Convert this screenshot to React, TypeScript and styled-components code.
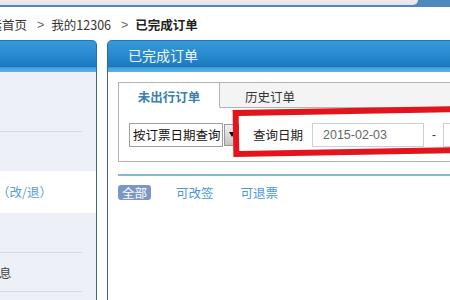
import React from "react";
import styled, { createGlobalStyle } from "styled-components";

const Global = createGlobalStyle`
  html, body { margin: 0; padding: 0; background: #fff; }
  body {
    font-family: "Noto Sans CJK SC", "Liberation Sans", sans-serif;
    width: 450px;
    height: 300px;
    overflow: hidden;
  }
`;

const Page = styled.div`
  position: relative;
  width: 450px;
  height: 300px;
  overflow: hidden;
  background: #fff;
  display: flex;
  flex-direction: column;
`;

const TopBar = styled.div`
  height: 7px;
  flex-shrink: 0;
  background: #4d88be;
  display: flex;
`;

const TopStrip = styled.div`
  width: 418px;
  height: 5px;
  background: linear-gradient(#f0e9ef, #e5e2ea);
  border-bottom-right-radius: 6px;
`;

const Crumbs = styled.div`
  height: 33px;
  flex-shrink: 0;
  box-sizing: border-box;
  padding-top: 2px;
  display: flex;
  align-items: center;
  font-size: 12.5px;
  color: #333;
  white-space: nowrap;
`;

const CrumbLink = styled.span<{ $offset?: number }>`
  margin-left: ${(p) => p.$offset ?? 0}px;
`;

const CrumbSep = styled.span`
  font-family: "Liberation Sans", sans-serif;
  color: #666;
  margin: 0 7px 0 10px;
`;

const CrumbCurrent = styled.span`
  font-weight: bold;
  color: #222;
`;

const Main = styled.div`
  flex: 1;
  display: flex;
  align-items: stretch;
`;

const LeftPanel = styled.div`
  width: 97px;
  flex-shrink: 0;
  display: flex;
  flex-direction: column;
`;

const PanelHeader = styled.div<{ $corner: "left" | "right" }>`
  height: 32px;
  flex-shrink: 0;
  box-sizing: border-box;
  border-top: 1px solid #2a74b2;
  ${(p) =>
    p.$corner === "left"
      ? "border-top-left-radius: 5px; border-left: 1px solid #2a6aa2;"
      : "border-top-right-radius: 5px; border-right: 1px solid #2a6aa2;"}
  background: linear-gradient(
    to bottom,
    #3798da 0%,
    #2a8ad0 45%,
    #1e7bc3 78%,
    #1a74bc 83%,
    #45a3de 86%,
    #5ab2e6 100%
  );
  display: flex;
  align-items: center;
  padding: 0 0 4px 20px;
  color: #eef7ff;
  font-size: 14px;
`;

const LeftBody = styled.div`
  flex: 1;
  background: #eef0f8;
  border-right: 1px solid #3d6874;
  display: flex;
  flex-direction: column;
`;

const NavRow = styled.div<{ $h: number; $active?: boolean }>`
  height: ${(p) => p.$h}px;
  flex-shrink: 0;
  background: ${(p) => (p.$active ? "#fff" : "transparent")};
`;

const NavInner = styled.div<{ $sep?: boolean; $active?: boolean }>`
  width: 82px;
  height: 100%;
  box-sizing: border-box;
  border-bottom: 1px solid ${(p) => (p.$sep ? "#d4d9e5" : "transparent")};
  display: flex;
  align-items: center;
  font-size: 12.5px;
  color: ${(p) => (p.$active ? "#5a9fcc" : "#444")};
  white-space: nowrap;
`;

const NavText = styled.span<{ $shift: number }>`
  margin-left: ${(p) => p.$shift}px;
`;

const RightPanel = styled.div`
  flex: 1;
  min-width: 0;
  margin-left: 10px;
  display: flex;
  flex-direction: column;
`;

const RightBody = styled.div`
  flex: 1;
  min-width: 0;
  border-left: 1px solid #3d6874;
  padding: 10px 0 0 10px;
  display: flex;
  flex-direction: column;
`;

const TabBar = styled.div`
  display: flex;
  height: 26px;
  box-sizing: border-box;
  border-top: 1px solid #b4b4b4;
  border-left: 1px solid #b4b4b4;
  background: #f4f4f4;
`;

const Tab = styled.div<{ $active?: boolean; $w?: number }>`
  ${(p) => (p.$w ? `width: ${p.$w}px; flex-shrink: 0;` : "flex: 1;")}
  height: 25px;
  box-sizing: border-box;
  padding-top: 3px;
  display: flex;
  align-items: center;
  justify-content: center;
  font-size: 12.5px;
  white-space: nowrap;
  background: ${(p) => (p.$active ? "#fff" : "#f4f4f4")};
  border-right: ${(p) => (p.$active ? "1px solid #b4b4b4" : "none")};
  border-bottom: 1px solid ${(p) => (p.$active ? "#fff" : "#b4b4b4")};
  color: ${(p) => (p.$active ? "#3b7fae" : "#333")};
  font-weight: ${(p) => (p.$active ? "bold" : "normal")};
`;

const QueryBox = styled.div`
  height: 54px;
  box-sizing: border-box;
  border-left: 1px solid #b4b4b4;
  border-bottom: 1px solid #b4b4b4;
  padding-left: 10px;
  display: flex;
  align-items: center;
  white-space: nowrap;
  overflow: hidden;
  & > * { flex-shrink: 0; }
`;

const SelectBox = styled.div`
  width: 94px;
  height: 24px;
  box-sizing: border-box;
  border: 1px solid #9e9e9e;
  background: #fff;
  display: flex;
  align-items: center;
  padding-left: 3px;
  font-size: 12.5px;
  color: #111;
  overflow: hidden;
`;

const ArrowBtn = styled.div`
  width: 15px;
  height: 22px;
  margin-left: 1px;
  box-sizing: border-box;
  border: 1px solid #999;
  background: linear-gradient(#f2f2f2, #c4c4c4);
  display: flex;
  align-items: center;
  justify-content: center;
`;

const Triangle = styled.span`
  width: 0;
  height: 0;
  border-left: 3px solid transparent;
  border-right: 3px solid transparent;
  border-top: 5px solid #111;
`;

const Label = styled.span`
  margin-left: 14px;
  font-size: 12.5px;
  color: #222;
`;

const DateInput = styled.div<{ $gap: number }>`
  margin-left: ${(p) => p.$gap}px;
  width: 112px;
  height: 24px;
  box-sizing: border-box;
  border: 1px solid #cfcfcf;
  background: #fff;
  display: flex;
  align-items: center;
  padding-left: 10px;
  font-family: "Liberation Sans", sans-serif;
  font-size: 12.5px;
  color: #666;
`;

const Dash = styled.span`
  margin-left: 8px;
  font-family: "Liberation Sans", sans-serif;
  font-size: 12px;
  color: #333;
`;

const TealLine = styled.div`
  margin-top: 12px;
  height: 2px;
  background: #7bbfcb;
`;

const Filters = styled.div`
  margin-top: 9px;
  display: flex;
  align-items: center;
  gap: 23px;
  font-size: 12.5px;
  white-space: nowrap;
`;

const Badge = styled.span`
  height: 15px;
  line-height: 15px;
  padding: 0 4px;
  border-radius: 3px;
  background: #7c97c6;
  color: #fff;
`;

const FilterLink = styled.span`
  padding: 0 2px;
  color: #4a97d6;
  line-height: 15px;
`;

const Annotation = styled.div`
  position: absolute;
  left: 233px;
  top: 110px;
  width: 236px;
  height: 47px;
  box-sizing: border-box;
  border: 6px solid #e3141c;
  transform: rotate(-1deg);
  transform-origin: 0 50%;
  pointer-events: none;
`;

export default function App() {
  return (
    <>
      <Global />
      <Page>
        <TopBar>
          <TopStrip />
        </TopBar>
        <Crumbs>
          <CrumbLink $offset={-23}>客运首页</CrumbLink>
          <CrumbSep>&gt;</CrumbSep>
          <CrumbLink>我的12306</CrumbLink>
          <CrumbSep>&gt;</CrumbSep>
          <CrumbCurrent>已完成订单</CrumbCurrent>
        </Crumbs>
        <Main>
          <LeftPanel>
            <PanelHeader $corner="right" />
            <LeftBody>
              <NavRow $h={60}>
                <NavInner $sep />
              </NavRow>
              <NavRow $h={39}>
                <NavInner />
              </NavRow>
              <NavRow $h={42} $active>
                <NavInner $active>
                  <NavText $shift={-3}>（改/退）</NavText>
                </NavInner>
              </NavRow>
              <NavRow $h={40}>
                <NavInner $sep />
              </NavRow>
              <NavRow $h={39}>
                <NavInner $sep>
                  <NavText $shift={-1}>息</NavText>
                </NavInner>
              </NavRow>
            </LeftBody>
          </LeftPanel>
          <RightPanel>
            <PanelHeader $corner="left">已完成订单</PanelHeader>
            <RightBody>
              <TabBar>
                <Tab $active $w={101}>未出行订单</Tab>
                <Tab $w={100}>历史订单</Tab>
                <Tab />
              </TabBar>
              <QueryBox>
                <SelectBox>按订票日期查询</SelectBox>
                <ArrowBtn>
                  <Triangle />
                </ArrowBtn>
                <Label>查询日期</Label>
                <DateInput $gap={9}>2015-02-03</DateInput>
                <Dash>-</Dash>
                <DateInput $gap={7} />
              </QueryBox>
              <TealLine />
              <Filters>
                <Badge>全部</Badge>
                <FilterLink>可改签</FilterLink>
                <FilterLink>可退票</FilterLink>
              </Filters>
            </RightBody>
          </RightPanel>
        </Main>
        <Annotation />
      </Page>
    </>
  );
}
